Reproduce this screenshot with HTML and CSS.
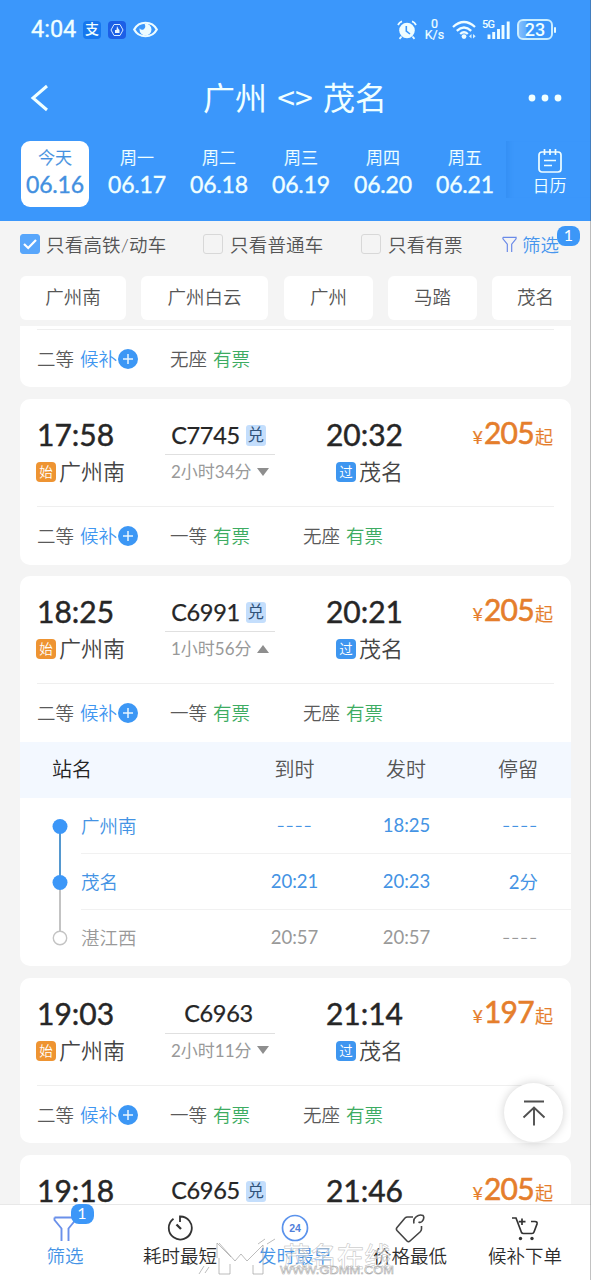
FILE: index.html
```html
<!DOCTYPE html>
<html lang="zh-CN">
<head>
<meta charset="utf-8">
<title>广州 - 茂名</title>
<link rel="stylesheet" href="styles.css">
</head>
<body>
<svg class="defs" width="0" height="0">
  <symbol id="plus" viewBox="0 0 20 20"><circle cx="10" cy="10" r="10" fill="#3c97f5"/><path d="M10 5v10M5 10h10" stroke="#e8f6ff" stroke-width="1.5"/></symbol>
  <symbol id="funnel" viewBox="0 0 24 26"><path d="M1.500 1.500H22.500V4L15.500 12.500V25M1.500 1.500V4L8.500 12.500V25" fill="none" stroke="currentColor" stroke-width="1.900"/></symbol>
</svg>
<div class="phone">
  <header class="top">
    <div class="status">
      <span class="clock">4:04</span>
      <span class="app pay">支</span>
      <span class="app hand"><svg width="14" height="14" viewBox="0 0 14 14"><path d="M4 1.500H10L13 7 10 12.500H4L1 7Z" fill="none" stroke="#d6eaff" stroke-width="1"/><path d="M7 3L8.500 6 9.500 7V10H5V7L6.500 7Z" fill="#e8f5ff"/></svg></span>
      <svg class="eye" width="25" height="17" viewBox="0 0 25 17"><path d="M1.200 8.500C6 -0.500 19 -0.500 23.800 8.500C19 17.500 6 17.500 1.200 8.500Z" fill="none" stroke="#eefcff" stroke-width="2.200"/><path d="M12.500 2.500A6 6 0 1 1 6.500 8.500Q6.500 8 6.800 7.200Q8 9.500 10.500 8.500Q13.500 6.500 11.500 2.800Z" fill="#eefcff"/></svg>
      <svg class="alarm" width="20" height="20" viewBox="0 0 20 20"><circle cx="10" cy="10.500" r="7.800" fill="#effdff"/><path d="M1 5Q2.500 2 5 1.300M15 1.300Q17.500 2 19 5M4.500 16.500L2.500 18.800M15.500 16.500L17.500 18.800" stroke="#effdff" stroke-width="1.800" fill="none"/><path d="M9.300 6V11L13 14" stroke="#3b97fb" stroke-width="1.600" fill="none"/></svg>
      <span class="speed"><b>0</b><b>K/s</b></span>
      <svg class="wifi" width="25" height="20" viewBox="0 0 25 20"><g fill="none" stroke="#effdff" stroke-width="2.300"><path d="M1 7Q12 -3 23 7"/><path d="M4.800 10.800Q12 4.200 19.200 10.800"/><path d="M8.200 14Q12 10.500 15.800 14"/></g><circle cx="12" cy="16.600" r="2.400" fill="#effdff"/><path d="M19.500 14L17 16.300 19.500 18.600ZM21 14V18.600L23.700 16.300Z" fill="#d6f0ff"/></svg>
      <span class="signal"><i>5G</i><svg width="27" height="20" viewBox="0 0 27 20"><path d="M6 19V14.500M10.700 19V12M15.500 19V9M20 19V5M25.200 19V1.500" stroke="#effdff" stroke-width="2.900"/></svg></span>
      <span class="battery">23</span><span class="nub"></span>
    </div>
    <div class="nav">
      <svg width="20" height="28" viewBox="0 0 20 28"><path d="M18 2L4 14L18 26" fill="none" stroke="#f0ffff" stroke-width="3"/></svg>
      <h1>广州 &lt;&gt; 茂名</h1>
      <svg width="34" height="8" viewBox="0 0 34 8"><g fill="#f0ffff"><circle cx="4" cy="4" r="3.400"/><circle cx="17" cy="4" r="3.400"/><circle cx="30" cy="4" r="3.400"/></g></svg>
    </div>
    <div class="dates">
      <div class="day on"><span>今天</span><b>06.16</b></div>
      <div class="day"><span>周一</span><b>06.17</b></div>
      <div class="day"><span>周二</span><b>06.18</b></div>
      <div class="day"><span>周三</span><b>06.19</b></div>
      <div class="day"><span>周四</span><b>06.20</b></div>
      <div class="day"><span>周五</span><b>06.21</b></div>
      <div class="cal"><svg width="24" height="24" viewBox="0 0 24 24"><g fill="none" stroke="#effdff" stroke-width="1.700"><rect x="1" y="3" width="22" height="20" rx="3"/><path d="M6.500 0V6M12 0V6M17.500 0V6M6 11.500H18M6 16.500H14"/></g></svg><span>日历</span></div>
    </div>
  </header>

  <div class="filters">
    <span class="box checked"><svg width="14" height="11" viewBox="0 0 14 11"><path d="M1 5L5.200 9L13 1" fill="none" stroke="#fff" stroke-width="2.200"/></svg></span><span class="opt o1">只看高铁/动车</span>
    <span class="box"></span><span class="opt o2">只看普通车</span>
    <span class="box"></span><span class="opt o3">只看有票</span>
    <svg class="fun" width="15" height="17"><use href="#funnel"/></svg><span class="sift">筛选<em class="badge">1</em></span>
  </div>
  <div class="chips"><span class="w1">广州南</span><span class="w2">广州白云</span><span class="w3">广州</span><span class="w3">马踏</span><span class="w4">茂名</span></div>

  <main class="list">
    <section class="card partial">
      <div class="seats"><div>二等 <a>候补</a><svg><use href="#plus"/></svg></div><div>无座 <u>有票</u></div></div>
    </section>

    <section class="card">
      <div class="trip">
        <div class="time">17:58</div><div class="no">C7745<i>兑</i></div><div class="time arr">20:32</div><div class="price"><small>¥</small><b>205</b><span>起</span></div>
        <div class="stn"><i class="start">始</i>广州南</div><div class="dur">2小时34分<svg width="12" height="8"><path d="M0 0H12L6 8Z"/></svg></div><div class="stn arr"><i>过</i>茂名</div>
      </div>
      <div class="seats"><div>二等 <a>候补</a><svg><use href="#plus"/></svg></div><div>一等 <u>有票</u></div><div>无座 <u>有票</u></div></div>
    </section>

    <section class="card">
      <div class="trip">
        <div class="time">18:25</div><div class="no">C6991<i>兑</i></div><div class="time arr">20:21</div><div class="price"><small>¥</small><b>205</b><span>起</span></div>
        <div class="stn"><i class="start">始</i>广州南</div><div class="dur">1小时56分<svg width="12" height="8"><path d="M0 8H12L6 0Z"/></svg></div><div class="stn arr"><i>过</i>茂名</div>
      </div>
      <div class="seats"><div>二等 <a>候补</a><svg><use href="#plus"/></svg></div><div>一等 <u>有票</u></div><div>无座 <u>有票</u></div></div>
      <div class="thead"><span>站名</span><span>到时</span><span>发时</span><span>停留</span></div>
      <div class="stops">
        <svg class="rail" width="61" height="168" viewBox="0 0 61 168"><path d="M40 28V84" stroke="#5598cf" stroke-width="2"/><path d="M40 84V134" stroke="#c3c3c3" stroke-width="2"/><circle cx="40" cy="28.500" r="7.500" fill="#3c97f8"/><circle cx="40" cy="84.500" r="7.500" fill="#3c97f8"/><circle cx="40" cy="140" r="6.700" fill="#fff" stroke="#c3c3c3" stroke-width="1.400"/></svg>
        <div class="rows">
          <div class="stop"><span>广州南</span><span class="dash">----</span><span>18:25</span><span class="dash">----</span></div>
          <div class="stop"><span>茂名</span><span>20:21</span><span>20:23</span><span>2分</span></div>
          <div class="stop gray"><span>湛江西</span><span>20:57</span><span>20:57</span><span class="dash">----</span></div>
        </div>
      </div>
    </section>

    <section class="card">
      <div class="trip">
        <div class="time">19:03</div><div class="no">C6963</div><div class="time arr">21:14</div><div class="price"><small>¥</small><b>197</b><span>起</span></div>
        <div class="stn"><i class="start">始</i>广州南</div><div class="dur">2小时11分<svg width="12" height="8"><path d="M0 0H12L6 8Z"/></svg></div><div class="stn arr"><i>过</i>茂名</div>
      </div>
      <div class="seats"><div>二等 <a>候补</a><svg><use href="#plus"/></svg></div><div>一等 <u>有票</u></div><div>无座 <u>有票</u></div></div>
    </section>

    <section class="card last">
      <div class="trip">
        <div class="time">19:18</div><div class="no">C6965<i>兑</i></div><div class="time arr">21:46</div><div class="price"><small>¥</small><b>205</b><span>起</span></div>
      </div>
    </section>
  </main>

  <nav class="tabs">
    <div class="tab blue"><svg width="24" height="26"><use href="#funnel"/></svg><span>筛选</span><em class="badge">1</em></div>
    <div class="tab"><svg width="26" height="26" viewBox="0 0 26 26"><g fill="none" stroke="#333" stroke-width="1.800"><path d="M6.500 3.700A11.500 11.500 0 1 0 13 1.500V7"/><path d="M9.500 9.500L14 14" stroke-width="2.300"/></g></svg><span>耗时最短</span></div>
    <div class="tab blue"><svg width="28" height="28" viewBox="0 0 28 28"><circle cx="14" cy="14" r="12.500" fill="none" stroke="#5b93ec" stroke-width="1.700"/><text x="14" y="17.800" text-anchor="middle" class="n24">24</text></svg><span>发时最早</span></div>
    <div class="tab"><svg width="30" height="30" viewBox="0 0 30 30"><path d="M18 4H12.500Q11 4 10 5L2 14.500Q.8 16 2 17.500L12 28Q13.500 29.500 15 28L25 19Q26.500 17.500 26.500 16V13M19 10.500Q18 6 21 3.800Q24.500 1 28 2.500Q30 5 27 8.500Q25.500 10 23.500 9" fill="none" stroke="#444" stroke-width="1.600"/></svg><span>价格最低</span></div>
    <div class="tab cart"><svg width="28" height="26" viewBox="0 0 28 26"><path d="M1 3H5L10.500 17.500Q11 18.500 12.500 18.500H21Q22.500 18.500 23 17L26 9Q26.500 6.500 24 6.500H20M11 3.500V10M7.800 6.700H14.500" fill="none" stroke="#333" stroke-width="1.700"/><circle cx="9.500" cy="23.500" r="1.700" fill="#333"/><circle cx="21" cy="23.500" r="1.700" fill="#333"/></svg><span>候补下单</span></div>
  </nav>

  <div class="totop"><svg width="24" height="26" viewBox="0 0 24 26"><path d="M2 1.500H22M12 25.500V8M1.500 17.500L12 7.500L22.500 17.500" fill="none" stroke="#505050" stroke-width="1.900"/></svg></div>
  <svg class="mark" width="205" height="44" viewBox="0 0 205 44">
    <g fill="none" stroke="#a0a0a0" stroke-width="1" opacity=".7"><path d="M20 7V22M22 7L38 25L44 18L50 25L66 9V38H56V29M22 22V38H33V28M20 7L34 21M2 38L7 30M8 37L12 31M61 8L68 3M70 8L78 3"/></g>
    <text class="m1" x="86" y="31">茂名在线</text>
    <text class="m2" x="83" y="38" textLength="114" lengthAdjust="spacingAndGlyphs">WWW.GDMM.COM</text>
  </svg>
  <div class="edge"></div>
</div>
</body>
</html>
```
FILE: styles.css
```css
* { box-sizing: border-box; }
body { margin: 0; }
.defs { position: absolute; }
i, em { font-style: normal; }
b { font-weight: 400; }
u, a { text-decoration: none; }
.phone {
  position: relative;
  width: 591px;
  height: 1280px;
  overflow: hidden;
  display: flex;
  flex-direction: column;
  background: #f4f4f4;
  color: #555;
  font-family: Lato, "Noto Sans CJK SC", sans-serif;
  font-weight: 350;
  font-size: 18.5px;
  white-space: nowrap;
}

.top { height: 221px; flex: none; background: #3b97fb; color: #f0ffff; }
.status { height: 58px; padding: 1px 0 0 31px; display: flex; align-items: center; }
.clock { width: 46px; font: 400 23.500px/1 Roboto, sans-serif; -webkit-text-stroke: .3px; }
.app { width: 18px; height: 18px; margin-left: 6px; border-radius: 4px; display: flex; align-items: center; justify-content: center; font-size: 14px; font-weight: 500; line-height: 1; background: #1677ee; }
.pay { padding-bottom: 2px; }
.hand { margin-left: 7px; background: #1c5fe6; }
.eye { margin-left: 7px; }
.alarm { margin-left: 239px; }
.speed { width: 21px; margin: 0 0 1px 7px; display: flex; flex-direction: column; align-items: center; font: 400 12.500px/11.500px Roboto, sans-serif; -webkit-text-stroke: .2px; }
.wifi { margin-left: 7px; }
.signal { margin-left: 5px; display: flex; position: relative; }
.signal i { position: absolute; left: 0; top: -1px; font: 500 11px/12px Roboto, sans-serif; letter-spacing: -.8px; }
.signal svg { margin-left: 1px; }
.battery { width: 36px; height: 21px; margin-left: 7px; border: 2px solid #c9edff; border-radius: 6px; font: 500 18px/17px Roboto, sans-serif; text-align: center; background: linear-gradient(90deg, #84bffc, #5fabfc 23%, transparent 24%); }
.nub { width: 2px; height: 6px; margin-left: 1px; background: #e8faff; border-radius: 1px; }

.nav { height: 80px; padding: 0 29px 0 29px; display: flex; align-items: center; justify-content: space-between; }
.nav h1 { margin: 0 0 4px 13px; font-family: "Noto Sans CJK SC", sans-serif; font-size: 32px; font-weight: 400; line-height: 40px; word-spacing: 3px; }

.dates { height: 66px; margin-top: 3px; padding-left: 14px; display: flex; }
.day { width: 68px; margin: 0 7px; height: 66px; padding-top: 6px; border-radius: 9px; display: flex; flex-direction: column; align-items: center; -webkit-text-stroke: .15px; }
.day.on { background: #fff; color: #4390e0; }
.day span { font-size: 17px; line-height: 21px; }
.day b { font-size: 23px; line-height: 32px; letter-spacing: -.2px; -webkit-text-stroke: .35px; }
.cal { flex: 1; padding: 8px 0 0 2px; box-shadow: inset 7px 0 5px -4px rgba(20,100,200,.15); display: flex; flex-direction: column; align-items: center; font-size: 17px; line-height: 22px; height: 57px; }
.cal span { margin-top: 2px; }

.filters { height: 49px; padding: 0 0 3px 20px; display: flex; align-items: center; font-size: 18.5px; flex: none; }
.box { width: 20px; height: 20px; border: 1.500px solid #d8d8d8; border-radius: 3px; display: flex; align-items: center; justify-content: center; }
.checked { background: #58a6fb; border-color: #58a6fb; }
.opt { margin: -1px 0 0 6px; letter-spacing: .2px; }
.o1 { width: 157px; }
.o2, .o3 { padding-left: 1px; }
.o2 { width: 132px; }
.o3 { width: 115px; }
.fun { color: #6a8ae8; }
.sift { position: relative; margin: -1px 0 0 5px; color: #4796ee; }
.badge { position: absolute; left: 35px; top: -5px; width: 23px; height: 20px; border-radius: 8px; background: #3c97f8; color: #fff; text-align: center; font-size: 16px; font-weight: 400; line-height: 17px; }

.chips { height: 56px; padding: 6px 20px 6px; display: flex; gap: 15px; flex: none; }
.chips span { height: 44px; line-height: 42px; background: #fff; border-radius: 6px; text-align: center; flex: none; }
.w1 { width: 106px; }
.w2 { width: 127px; }
.chips .w2 + .w3 { margin-left: 1px; }
.w3 { width: 89px; }
.chips .w4 { width: 79px; padding-left: 8px; border-radius: 6px 0 0 6px; }

.list { flex: 1; overflow: hidden; padding: 0 20px; }
.card { height: 165.500px; margin-bottom: 11.500px; border-radius: 10px; background: #fff; overflow: hidden; }
.card:nth-child(3) { height: 390px; }
.card.partial { height: 61px; padding-top: 3px; border-radius: 0 0 10px 10px; margin-bottom: 12px; }
.trip { height: 107px; padding: 17px 18px 0 17px; display: grid; grid-template-columns: 128px 110px 128px 1fr; grid-template-rows: 36px 40px; align-items: center; }
.time { font-size: 30px; line-height: 36px; font-weight: 400; color: #262626; -webkit-text-stroke: .45px; }
.arr { justify-self: end; }
.no { align-self: end; height: 40px; margin: 0 0 -3px; padding: 0 9px 0 6px; border-bottom: 1.500px solid #e0e0e0; display: flex; justify-content: center; align-items: center; color: #262626; font-size: 23.500px; font-weight: 400; line-height: 36px; letter-spacing: -.3px; -webkit-text-stroke: .25px; }
.no i { width: 20px; height: 21px; margin: 2px 0 0 6px; background: #c4defc; color: #31537a; border-radius: 3px; font-size: 16.500px; line-height: 20px; text-align: center; letter-spacing: 0; -webkit-text-stroke: 0; }
.price { justify-self: end; padding-top: 1px; color: #e57e2c; font-size: 30px; line-height: 36px; -webkit-text-stroke: .2px; }
.price b { letter-spacing: -.7px; -webkit-text-stroke: .6px; margin: 0 1px; }
.price small { font-size: 18px; font-weight: 400; }
.price span { font-size: 18px; }
.stn { display: flex; align-items: center; font-size: 22px; line-height: 36px; color: #444; }
.stn i { width: 20px; height: 20px; margin: 0 3px 0 -1px; border-radius: 4px; background: #3e96f0; color: #fff; font-size: 13.500px; line-height: 20px; text-align: center; }
.stn .start { background: #ee9432; }
.dur { display: flex; align-items: center; padding: 0 0 0 6px; font-size: 17px; font-weight: 400; line-height: 30px; color: #999; }
.dur svg { margin: 0 0 1px 5px; fill: #8e8e8e; }
.seats { height: 59px; margin: 0 17px; padding-bottom: 2px; border-top: 1.500px solid #efefef; display: grid; grid-template-columns: 133px 133px 1fr; align-items: center; color: #5a5a5a; }
.partial .seats { border-top-width: 1px; }
.seats div { display: flex; align-items: center; gap: 6px; }
.seats a { color: #3f96f0; }
.seats u { color: #3dac62; }
.seats svg { width: 20px; height: 20px; margin: 2px 0 0 -5.500px; }

.thead { height: 56px; padding: 0 33px 3px 32px; background: #f3f8ff; display: grid; grid-template-columns: 187px 111px 112px 1fr; align-items: center; font-size: 20px; text-align: center; color: #555; }
.thead span:first-child { text-align: left; color: #222; }
.thead span:last-child { text-align: right; }
.stops { display: flex; color: #4493e4; }
.rows { flex: 1; }
.stop { height: 56px; padding: 0 33px 2px 0; display: grid; grid-template-columns: 158px 111px 113px 1fr; align-items: center; text-align: center; border-bottom: 1.500px solid #f1f1f1; font-size: 18.500px; font-weight: 400; }
.stop span:first-child { text-align: left; font-size: 18.500px; font-weight: 350; }
.stop span:last-child { text-align: right; }
.dash { font-family: Inter, sans-serif; font-weight: 350; letter-spacing: .6px; }
.gray { color: #999; border: 0; }

.tabs { height: 76px; flex: none; padding: 0 8px; border-top: 1px solid #e8e8e8; background: #fff; display: flex; color: #2d2d2d; }
.tab { width: 115px; position: relative; left: -.5px; padding-top: 8px; display: flex; flex-direction: column; align-items: center; line-height: 27px; flex: none; }
.tab svg { height: 30px; }
.tab:first-child svg { height: 26px; margin: 3px 0 1px; color: #6a90ea; }
.tab.blue { color: #4593e6; }
.tab .badge { left: 63px; top: -1px; line-height: 17px; }
.n24 { font: 700 10.500px "Liberation Sans", sans-serif; fill: #517fda; }

.totop { position: absolute; left: 504px; top: 1083px; width: 59px; height: 59px; border-radius: 50%; background: #fff; box-shadow: 0 0 10px rgba(0,0,0,.18); display: flex; align-items: center; justify-content: center; }
.mark { position: absolute; left: 197px; top: 1236px; }
.m1 { font: 500 27px "Noto Sans CJK SC", sans-serif; fill: rgba(255,255,255,.5); stroke: #bbb; stroke-width: .5px; }
.m2 { font: 11.500px "Liberation Sans", sans-serif; fill: #fff; stroke: #a5a5a5; stroke-width: .5px; }
.edge { position: absolute; right: 0; top: 0; width: 1px; height: 1280px; background: rgba(80,80,80,.35); }
```
